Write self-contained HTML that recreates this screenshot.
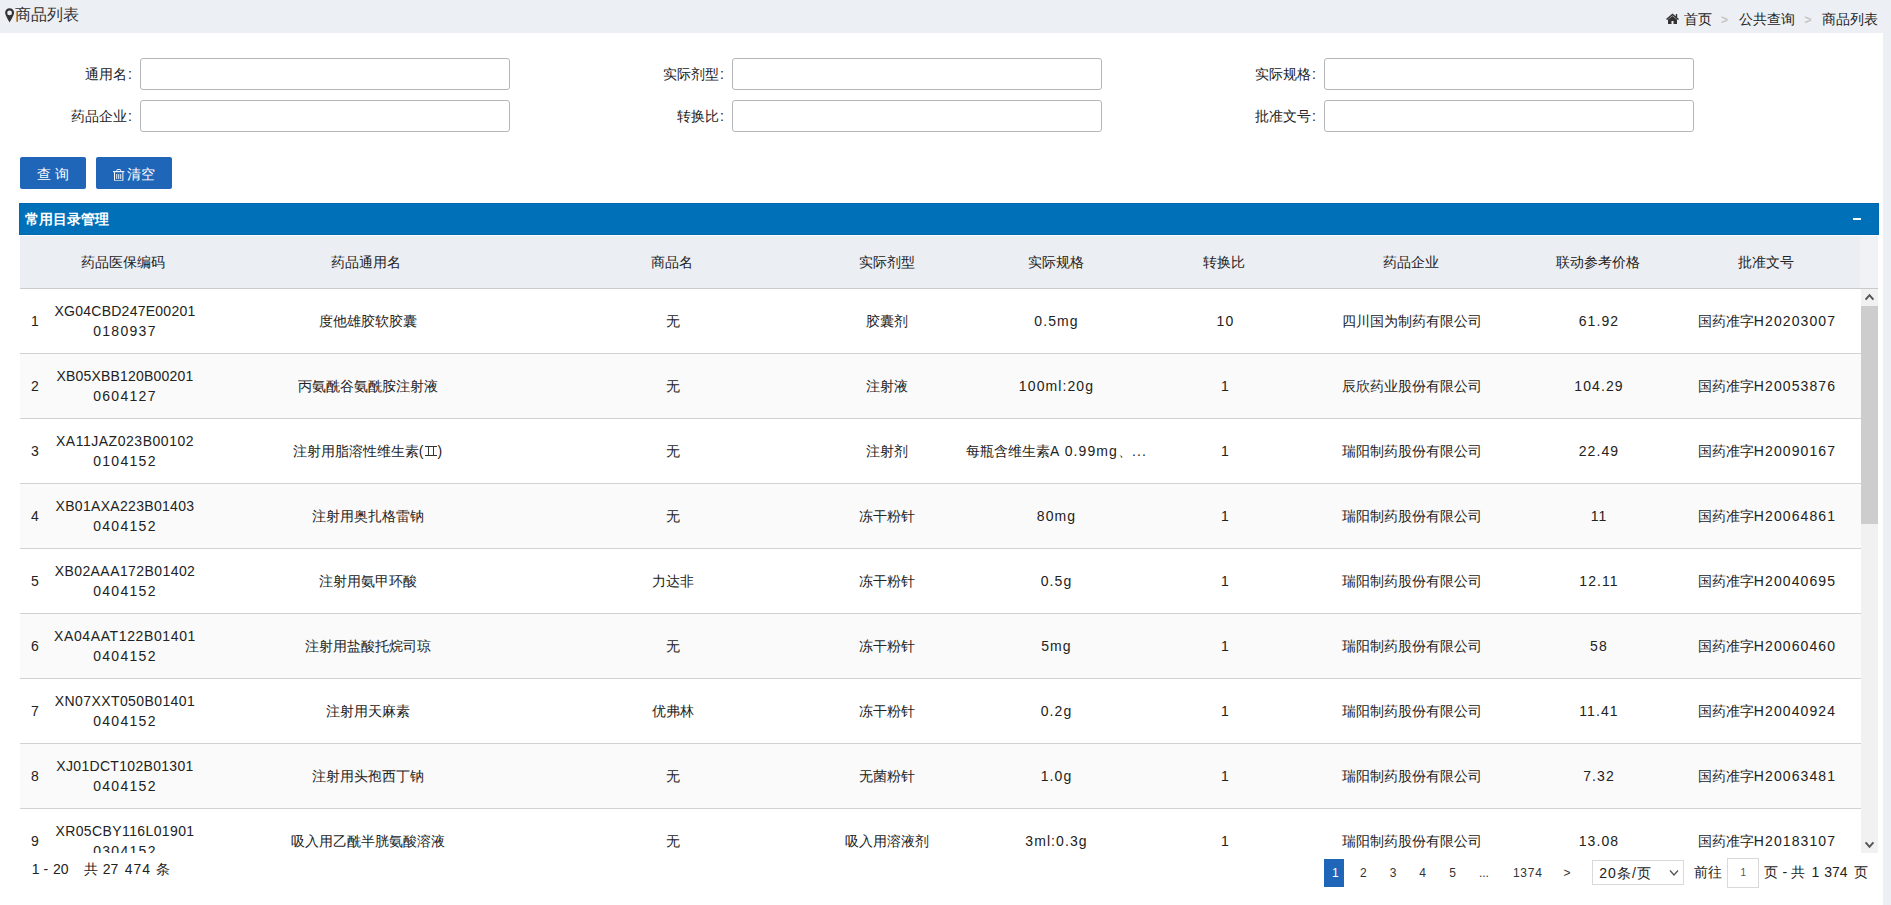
<!DOCTYPE html>
<html><head><meta charset="utf-8">
<style>
*{box-sizing:border-box}
html,body{margin:0;padding:0}
body{width:1891px;height:905px;overflow:hidden;position:relative;background:#fff;font-family:"Liberation Sans",sans-serif;font-size:14px;color:#222}
.a{position:absolute;white-space:nowrap}
.n{letter-spacing:1.1px}.n2{letter-spacing:0.55px}.n3{letter-spacing:1.3px}
#topbar{left:0;top:0;width:1891px;height:33px;background:#eceff4}
#rstrip{left:1883px;top:33px;width:8px;height:872px;background:#eceff4}
.lbl{text-align:right;width:150px;line-height:16px}
.inp{width:370px;height:32px;border:1px solid #b3b5b9;border-radius:3px;background:#fff}
.btn{background:#1f65b8;color:#fff;border-radius:2px;height:32px}
#phead{left:19px;top:203px;width:1860px;height:32px;background:#0071b8;border:1px solid #0068ae}
#thead{left:20px;top:236px;width:1858px;height:53px;background:#ebeef3;border-bottom:1px solid #cacaca}
#gutter{left:1840px;top:0;width:18px;height:52px;background:#f0f2f6}
#tbody{left:20px;top:289px;width:1858px;height:564px;overflow:hidden}
.row{position:absolute;left:0;width:1841px;height:65px;border-bottom:1px solid #d2d2d2}
.c{position:absolute;text-align:center;line-height:20px;white-space:nowrap;width:300px}
.r2{display:inline-block;position:relative;width:12px;height:10px;border-top:1px solid #333;border-bottom:1px solid #333;vertical-align:0px;margin:0 1px}.r2:before,.r2:after{content:'';position:absolute;top:0;bottom:0;width:1.4px;background:#333}.r2:before{left:3px}.r2:after{left:8px}
.pg{position:absolute;top:864px;line-height:16px;white-space:nowrap}
</style></head><body>
<div class="a" id="topbar"></div>
<div class="a" id="rstrip"></div>

<svg class="a" style="left:5px;top:8px" width="10" height="15" viewBox="0 0 10 15"><path d="M4.6 0.2C2.1 0.2 0.1 2.2 0.1 4.6c0 2.8 4.5 9.9 4.5 9.9s4.5-7.1 4.5-9.9C9.1 2.2 7.1 0.2 4.6 0.2z M4.6 2.5a2.4 2.4 0 1 1 0 4.8a2.4 2.4 0 1 1 0-4.8z" fill="#333" fill-rule="evenodd"/></svg>
<div class="a" style="left:15px;top:6px;font-size:16px;line-height:18px;color:#333">商品列表</div>
<svg class="a" style="left:1666px;top:13px" width="13" height="11" viewBox="0 0 13 11"><path d="M0 6L6.5 0.5L13 6L12 7L6.5 2.5L1 7z" fill="#333"/><rect x="9.8" y="1" width="1.4" height="3.5" fill="#333"/><path d="M2 6.5L6.5 3L11 6.5V11H7.5V8H5.5V11H2z" fill="#333"/></svg>
<div class="a" style="left:1684px;top:11px;line-height:16px">首页</div>
<div class="a" style="left:1721px;top:13px;font-size:12px;line-height:14px;color:#c4c4c4;font-weight:bold">&gt;</div>
<div class="a" style="left:1739px;top:11px;line-height:16px">公共查询</div>
<div class="a" style="left:1804.5px;top:13px;font-size:12px;line-height:14px;color:#c4c4c4;font-weight:bold">&gt;</div>
<div class="a" style="left:1822px;top:11px;line-height:16px">商品列表</div>
<div class="a lbl" style="left:-18px;top:66px">通用名<span style="margin-left:1px">:</span></div>
<div class="a inp" style="left:140px;top:58px"></div>
<div class="a lbl" style="left:574px;top:66px">实际剂型<span style="margin-left:1px">:</span></div>
<div class="a inp" style="left:732px;top:58px"></div>
<div class="a lbl" style="left:1166px;top:66px">实际规格<span style="margin-left:1px">:</span></div>
<div class="a inp" style="left:1324px;top:58px"></div>
<div class="a lbl" style="left:-18px;top:108px">药品企业<span style="margin-left:1px">:</span></div>
<div class="a inp" style="left:140px;top:100px"></div>
<div class="a lbl" style="left:574px;top:108px">转换比<span style="margin-left:1px">:</span></div>
<div class="a inp" style="left:732px;top:100px"></div>
<div class="a lbl" style="left:1166px;top:108px">批准文号<span style="margin-left:1px">:</span></div>
<div class="a inp" style="left:1324px;top:100px"></div>
<div class="a btn" style="left:20px;top:157px;width:66px"></div>
<div class="a" style="left:37px;top:166px;line-height:16px;color:#fff">查 询</div>
<div class="a btn" style="left:96px;top:157px;width:76px"></div>
<svg class="a" style="left:113px;top:169px" width="12" height="12" viewBox="0 0 12 12"><path d="M3.8 2.3V1.2Q3.8 0.5 4.5 0.5H6.9Q7.6 0.5 7.6 1.2V2.3" stroke="#fff" stroke-width="1" fill="none"/><rect x="0" y="2.1" width="11.4" height="1.1" fill="#fff"/><path d="M1.5 3.2V11.3Q1.5 11.9 2.1 11.9H9.3Q9.9 11.9 9.9 11.3V3.2" stroke="#fff" stroke-width="1" fill="none"/><rect x="3.3" y="5" width="0.9" height="5" fill="#fff"/><rect x="5.3" y="5" width="0.9" height="5" fill="#fff"/><rect x="7.3" y="5" width="0.9" height="5" fill="#fff"/></svg>
<div class="a" style="left:127px;top:166px;line-height:16px;color:#fff">清空</div>
<div class="a" id="phead"></div>
<div class="a" style="left:25px;top:211px;line-height:16px;color:#fff;font-weight:bold">常用目录管理</div>
<div class="a" style="left:1853px;top:218px;width:8px;height:2px;background:#fff"></div>
<div class="a" id="thead"><div class="a" id="gutter"></div>
<div class="c" style="left:-47.0px;top:16px">药品医保编码</div>
<div class="c" style="left:196.0px;top:16px">药品通用名</div>
<div class="c" style="left:501.5px;top:16px">商品名</div>
<div class="c" style="left:716.5px;top:16px">实际剂型</div>
<div class="c" style="left:885.5px;top:16px">实际规格</div>
<div class="c" style="left:1054.3px;top:16px">转换比</div>
<div class="c" style="left:1241.4px;top:16px">药品企业</div>
<div class="c" style="left:1428.0px;top:16px">联动参考价格</div>
<div class="c" style="left:1596.0px;top:16px">批准文号</div>
</div>
<div class="a" id="tbody">
<div class="row" style="top:0px;background:#fff">
<div class="c n" style="left:-4.5px;top:22px;width:40px">1</div>
<div class="c" style="left:-45.0px;top:12px"><span style="letter-spacing:0.25px">XG04CBD247E00201</span><br><span class="n3">0180937</span></div>
<div class="c" style="left:197.5px;top:22px">度他雄胶软胶囊</div>
<div class="c" style="left:503.0px;top:22px">无</div>
<div class="c" style="left:717.0px;top:22px">胶囊剂</div>
<div class="c" style="left:886.5px;top:22px"><span class="n">0.5mg</span></div>
<div class="c" style="left:1055.5px;top:22px"><span class="n">10</span></div>
<div class="c" style="left:1242.0px;top:22px">四川国为制药有限公司</div>
<div class="c" style="left:1429.0px;top:22px"><span class="n">61.92</span></div>
<div class="c" style="left:1597.0px;top:22px">国药准字<span class="n">H20203007</span></div>
</div>
<div class="row" style="top:65px;background:#fafafa">
<div class="c n" style="left:-4.5px;top:22px;width:40px">2</div>
<div class="c" style="left:-45.0px;top:12px"><span style="letter-spacing:0.20px">XB05XBB120B00201</span><br><span class="n3">0604127</span></div>
<div class="c" style="left:197.5px;top:22px">丙氨酰谷氨酰胺注射液</div>
<div class="c" style="left:503.0px;top:22px">无</div>
<div class="c" style="left:717.0px;top:22px">注射液</div>
<div class="c" style="left:886.5px;top:22px"><span class="n">100ml:20g</span></div>
<div class="c" style="left:1055.5px;top:22px"><span class="n">1</span></div>
<div class="c" style="left:1242.0px;top:22px">辰欣药业股份有限公司</div>
<div class="c" style="left:1429.0px;top:22px"><span class="n">104.29</span></div>
<div class="c" style="left:1597.0px;top:22px">国药准字<span class="n">H20053876</span></div>
</div>
<div class="row" style="top:130px;background:#fff">
<div class="c n" style="left:-4.5px;top:22px;width:40px">3</div>
<div class="c" style="left:-45.0px;top:12px"><span style="letter-spacing:0.53px">XA11JAZ023B00102</span><br><span class="n3">0104152</span></div>
<div class="c" style="left:197.5px;top:22px">注射用脂溶性维生素(<span class=r2></span>)</div>
<div class="c" style="left:503.0px;top:22px">无</div>
<div class="c" style="left:717.0px;top:22px">注射剂</div>
<div class="c" style="left:886.5px;top:22px">每瓶含维生素<span class="n">A 0.99mg</span>、<span class="n">...</span></div>
<div class="c" style="left:1055.5px;top:22px"><span class="n">1</span></div>
<div class="c" style="left:1242.0px;top:22px">瑞阳制药股份有限公司</div>
<div class="c" style="left:1429.0px;top:22px"><span class="n">22.49</span></div>
<div class="c" style="left:1597.0px;top:22px">国药准字<span class="n">H20090167</span></div>
</div>
<div class="row" style="top:195px;background:#fafafa">
<div class="c n" style="left:-4.5px;top:22px;width:40px">4</div>
<div class="c" style="left:-45.0px;top:12px"><span style="letter-spacing:0.31px">XB01AXA223B01403</span><br><span class="n3">0404152</span></div>
<div class="c" style="left:197.5px;top:22px">注射用奥扎格雷钠</div>
<div class="c" style="left:503.0px;top:22px">无</div>
<div class="c" style="left:717.0px;top:22px">冻干粉针</div>
<div class="c" style="left:886.5px;top:22px"><span class="n">80mg</span></div>
<div class="c" style="left:1055.5px;top:22px"><span class="n">1</span></div>
<div class="c" style="left:1242.0px;top:22px">瑞阳制药股份有限公司</div>
<div class="c" style="left:1429.0px;top:22px"><span class="n">11</span></div>
<div class="c" style="left:1597.0px;top:22px">国药准字<span class="n">H20064861</span></div>
</div>
<div class="row" style="top:260px;background:#fff">
<div class="c n" style="left:-4.5px;top:22px;width:40px">5</div>
<div class="c" style="left:-45.0px;top:12px"><span style="letter-spacing:0.42px">XB02AAA172B01402</span><br><span class="n3">0404152</span></div>
<div class="c" style="left:197.5px;top:22px">注射用氨甲环酸</div>
<div class="c" style="left:503.0px;top:22px">力达非</div>
<div class="c" style="left:717.0px;top:22px">冻干粉针</div>
<div class="c" style="left:886.5px;top:22px"><span class="n">0.5g</span></div>
<div class="c" style="left:1055.5px;top:22px"><span class="n">1</span></div>
<div class="c" style="left:1242.0px;top:22px">瑞阳制药股份有限公司</div>
<div class="c" style="left:1429.0px;top:22px"><span class="n">12.11</span></div>
<div class="c" style="left:1597.0px;top:22px">国药准字<span class="n">H20040695</span></div>
</div>
<div class="row" style="top:325px;background:#fafafa">
<div class="c n" style="left:-4.5px;top:22px;width:40px">6</div>
<div class="c" style="left:-45.0px;top:12px"><span style="letter-spacing:0.62px">XA04AAT122B01401</span><br><span class="n3">0404152</span></div>
<div class="c" style="left:197.5px;top:22px">注射用盐酸托烷司琼</div>
<div class="c" style="left:503.0px;top:22px">无</div>
<div class="c" style="left:717.0px;top:22px">冻干粉针</div>
<div class="c" style="left:886.5px;top:22px"><span class="n">5mg</span></div>
<div class="c" style="left:1055.5px;top:22px"><span class="n">1</span></div>
<div class="c" style="left:1242.0px;top:22px">瑞阳制药股份有限公司</div>
<div class="c" style="left:1429.0px;top:22px"><span class="n">58</span></div>
<div class="c" style="left:1597.0px;top:22px">国药准字<span class="n">H20060460</span></div>
</div>
<div class="row" style="top:390px;background:#fff">
<div class="c n" style="left:-4.5px;top:22px;width:40px">7</div>
<div class="c" style="left:-45.0px;top:12px"><span style="letter-spacing:0.40px">XN07XXT050B01401</span><br><span class="n3">0404152</span></div>
<div class="c" style="left:197.5px;top:22px">注射用天麻素</div>
<div class="c" style="left:503.0px;top:22px">优弗林</div>
<div class="c" style="left:717.0px;top:22px">冻干粉针</div>
<div class="c" style="left:886.5px;top:22px"><span class="n">0.2g</span></div>
<div class="c" style="left:1055.5px;top:22px"><span class="n">1</span></div>
<div class="c" style="left:1242.0px;top:22px">瑞阳制药股份有限公司</div>
<div class="c" style="left:1429.0px;top:22px"><span class="n">11.41</span></div>
<div class="c" style="left:1597.0px;top:22px">国药准字<span class="n">H20040924</span></div>
</div>
<div class="row" style="top:455px;background:#fafafa">
<div class="c n" style="left:-4.5px;top:22px;width:40px">8</div>
<div class="c" style="left:-45.0px;top:12px"><span style="letter-spacing:0.31px">XJ01DCT102B01301</span><br><span class="n3">0404152</span></div>
<div class="c" style="left:197.5px;top:22px">注射用头孢西丁钠</div>
<div class="c" style="left:503.0px;top:22px">无</div>
<div class="c" style="left:717.0px;top:22px">无菌粉针</div>
<div class="c" style="left:886.5px;top:22px"><span class="n">1.0g</span></div>
<div class="c" style="left:1055.5px;top:22px"><span class="n">1</span></div>
<div class="c" style="left:1242.0px;top:22px">瑞阳制药股份有限公司</div>
<div class="c" style="left:1429.0px;top:22px"><span class="n">7.32</span></div>
<div class="c" style="left:1597.0px;top:22px">国药准字<span class="n">H20063481</span></div>
</div>
<div class="row" style="top:520px;background:#fff">
<div class="c n" style="left:-4.5px;top:22px;width:40px">9</div>
<div class="c" style="left:-45.0px;top:12px"><span style="letter-spacing:0.39px">XR05CBY116L01901</span><br><span class="n3">0304152</span></div>
<div class="c" style="left:197.5px;top:22px">吸入用乙酰半胱氨酸溶液</div>
<div class="c" style="left:503.0px;top:22px">无</div>
<div class="c" style="left:717.0px;top:22px">吸入用溶液剂</div>
<div class="c" style="left:886.5px;top:22px"><span class="n">3ml:0.3g</span></div>
<div class="c" style="left:1055.5px;top:22px"><span class="n">1</span></div>
<div class="c" style="left:1242.0px;top:22px">瑞阳制药股份有限公司</div>
<div class="c" style="left:1429.0px;top:22px"><span class="n">13.08</span></div>
<div class="c" style="left:1597.0px;top:22px">国药准字<span class="n">H20183107</span></div>
</div>
</div>
<div class="a" style="left:1861px;top:289px;width:17px;height:564px;background:#f1f1f1"></div>
<div class="a" style="left:1861px;top:306px;width:17px;height:218px;background:#cdcdcd"></div>
<svg class="a" style="left:1861px;top:289px" width="17" height="17"><path d="M4.6 10.6L8.5 6.2L12.4 10.6" stroke="#555" stroke-width="2" fill="none"/></svg>
<svg class="a" style="left:1861px;top:836px" width="17" height="17"><path d="M4.6 6.4L8.5 10.8L12.4 6.4" stroke="#555" stroke-width="2" fill="none"/></svg>
<div class="a tk" style="left:31.8px;top:861px;line-height:16px;letter-spacing:0">1</div>
<div class="a tk" style="left:43.6px;top:861px;line-height:16px;letter-spacing:0">-</div>
<div class="a tk" style="left:52.9px;top:861px;line-height:16px;letter-spacing:0">20</div>
<div class="a tk" style="left:83.8px;top:861px;line-height:16px;letter-spacing:0">共</div>
<div class="a tk" style="left:102.8px;top:861px;line-height:16px;letter-spacing:0">27</div>
<div class="a tk" style="left:124.8px;top:861px;line-height:16px;letter-spacing:1px">474</div>
<div class="a tk" style="left:155.7px;top:861px;line-height:16px;letter-spacing:0">条</div>
<div class="a" style="left:1324px;top:859px;width:20px;height:28px;background:#1f65b8"></div>
<div class="a tk pgn" style="left:1332.0px;top:866px;font-size:12px;line-height:14px;color:#fff;letter-spacing:0">1</div>
<div class="a tk pgn" style="left:1360.0px;top:866px;font-size:12px;line-height:14px;color:#333;letter-spacing:0">2</div>
<div class="a tk pgn" style="left:1389.7px;top:866px;font-size:12px;line-height:14px;color:#333;letter-spacing:0">3</div>
<div class="a tk pgn" style="left:1419.3px;top:866px;font-size:12px;line-height:14px;color:#333;letter-spacing:0">4</div>
<div class="a tk pgn" style="left:1449.3px;top:866px;font-size:12px;line-height:14px;color:#333;letter-spacing:0">5</div>
<div class="a tk pgn" style="left:1478.9px;top:866px;font-size:12px;line-height:14px;color:#333;letter-spacing:0">...</div>
<div class="a tk pgn" style="left:1512.9px;top:866px;font-size:12px;line-height:14px;color:#333;letter-spacing:0.8px">1374</div>
<div class="a tk pgn" style="left:1563.6px;top:866px;font-size:12px;line-height:14px;color:#333;letter-spacing:0">&gt;</div>
<div class="a" style="left:1592px;top:860px;width:92px;height:25px;border:1px solid #d9d9d9;background:#fff"></div>
<div class="a tk" style="left:1599.2px;top:865px;line-height:16px"><span class="n">20</span>条<span style="letter-spacing:1px;margin-left:1px">/</span>页</div>
<svg class="a" style="left:1669px;top:869px" width="10" height="8"><path d="M1 1.5L5 6L9 1.5" stroke="#555" stroke-width="1.3" fill="none"/></svg>
<div class="a tk" style="left:1694.3px;top:864px;line-height:16px">前往</div>
<div class="a" style="left:1727px;top:858px;width:32px;height:30px;border:1px solid #d9d9d9;background:#fff"></div>
<div class="a tk" style="left:1740.4px;top:867px;font-size:10px;line-height:12px;color:#555">1</div>
<div class="a tk" style="left:1763.9px;top:864px;line-height:16px">页</div>
<div class="a tk" style="left:1782.6px;top:864px;line-height:16px">-</div>
<div class="a tk" style="left:1791.2px;top:864px;line-height:16px">共</div>
<div class="a tk" style="left:1811.5px;top:864px;line-height:16px">1</div>
<div class="a tk" style="left:1824.2px;top:864px;line-height:16px">374</div>
<div class="a tk" style="left:1854.0px;top:864px;line-height:16px">页</div>
</body></html>
